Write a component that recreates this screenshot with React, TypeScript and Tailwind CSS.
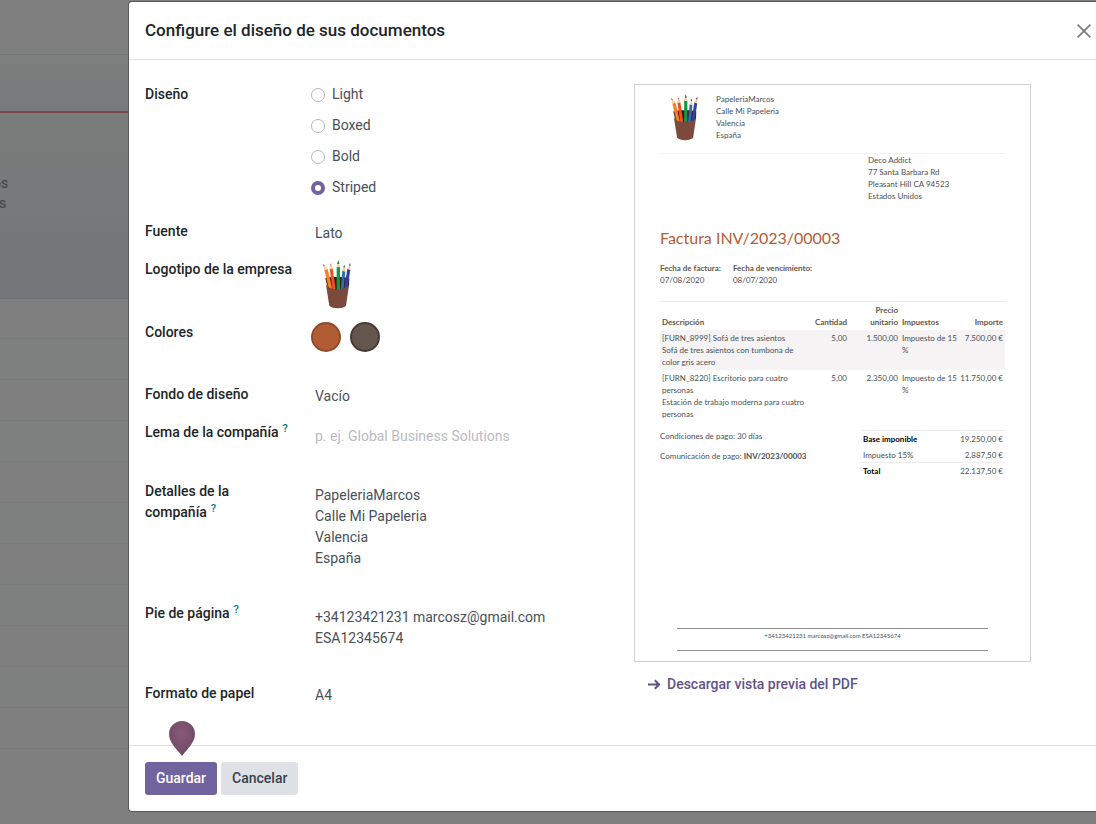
import React from "react";

const PAPER_TEXT = "text-[8px] leading-3";

function PencilCup({ className }: { className?: string }) {
  return (
    <svg viewBox="66 26 87 150" className={className} role="img" aria-label="Logotipo">
      <path d="M76 84 C90 79 134 79 148 84 L147 104 L140 122 L86 122 Z" fill="#3a1712" />
      <path d="M73 59 L83 56 L97 116 L87 117 Z" fill="#f58220" />
      <path d="M70 41 L83 56 L73 60 Z" fill="#f3cfa4" />
      <path d="M70 41 L74 46 L71 49 Z" fill="#8a4a1c" />
      <path d="M89 56 L98 54 L107 117 L98 118 Z" fill="#f04e23" />
      <path d="M92 39 L98 55 L89 57 Z" fill="#f3cfa4" />
      <path d="M92 39 L94 45 L91 46 Z" fill="#c8321a" />
      <path d="M127 61 L136 63 L131 117 L122 117 Z" fill="#2f6fa8" />
      <path d="M133 44 L136 64 L127 61 Z" fill="#f3cfa4" />
      <path d="M133 44 L135 52 L130 50 Z" fill="#23557f" />
      <path d="M142 55 L151 58 L142 117 L132 117 Z" fill="#35409b" />
      <path d="M151 38 L151 59 L142 56 Z" fill="#f3cfa4" />
      <path d="M151 38 L151 47 L147 45 Z" fill="#2b3182" />
      <path d="M110 50 L120 50 L120 119 L110 119 Z" fill="#109a48" />
      <path d="M115 30 L120 51 L110 51 Z" fill="#f3cfa4" />
      <path d="M115 29 L118 41 L112 41 Z" fill="#0b7a3a" />
      <path d="M77 98 C80 124 145 124 148 98 L138 166 C130 176 96 176 88 166 Z" fill="#7b4a3c" />
    </svg>
  );
}

function Field({
  id,
  label,
  help,
  className,
  children,
}: {
  id?: string;
  label: string;
  help?: boolean;
  className: string;
  children: React.ReactNode;
}) {
  return (
    <div className={`flex ${className}`}>
      <label htmlFor={id} className="w-[166px] shrink-0 pr-4 font-medium text-[#212529]">
        {label}
        {help && <sup className="ml-1 text-[11px] leading-none text-[#017e84]">?</sup>}
      </label>
      <div className="min-w-0 flex-1">{children}</div>
    </div>
  );
}

const layouts = ["Light", "Boxed", "Bold", "Striped"];

const invoiceLines = [
  {
    name: "[FURN_8999] Sofá de tres asientos",
    detail: "Sofá de tres asientos con tumbona de color gris acero",
    qty: "5,00",
    price: "1.500,00",
    tax: "Impuesto de 15 %",
    amount: "7.500,00 €",
  },
  {
    name: "[FURN_8220] Escritorio para cuatro personas",
    detail: "Estación de trabajo moderna para cuatro personas",
    qty: "5,00",
    price: "2.350,00",
    tax: "Impuesto de 15 %",
    amount: "11.750,00 €",
  },
];

function InvoicePreview() {
  return (
    <article
      className={`flex min-h-[578px] flex-col border border-[#ced0d2] bg-white px-[25px] pt-2 pb-[10px] font-[Lato,sans-serif] text-[#495057] ${PAPER_TEXT}`}
    >
      <header className="flex h-[61px] border-b border-[#f1f1f2]">
        <PencilCup className="ml-[10px] h-[48px] w-[28px]" />
        <address className="ml-[18px] not-italic">
          PapeleriaMarcos
          <br />
          Calle Mi Papeleria
          <br />
          Valencia
          <br />
          España
        </address>
      </header>
      <address className="ml-[208px] not-italic">
        Deco Addict
        <br />
        77 Santa Barbara Rd
        <br />
        Pleasant Hill CA 94523
        <br />
        Estados Unidos
      </address>
      <h2 className="mt-6 text-base leading-6 text-[#b05d36]">Factura INV/2023/00003</h2>
      <dl className="mt-3 flex gap-3">
        <div>
          <dt className="font-bold text-[#65564d]">Fecha de factura:</dt>
          <dd>07/08/2020</dd>
        </div>
        <div>
          <dt className="font-bold text-[#65564d]">Fecha de vencimiento:</dt>
          <dd>08/07/2020</dd>
        </div>
      </dl>
      <table className="mt-[15px] w-full table-fixed border-t border-[#ececee]">
        <colgroup>
          <col />
          <col className="w-[41px]" />
          <col className="w-[51px]" />
          <col className="w-[58px]" />
          <col className="w-[47px]" />
        </colgroup>
        <thead>
          <tr className="align-bottom text-[#65564d]">
            <th className="px-0.5 py-0.5 text-left font-bold">Descripción</th>
            <th className="px-0.5 py-0.5 text-right font-bold">Cantidad</th>
            <th className="px-0.5 py-0.5 text-right font-bold">Precio unitario</th>
            <th className="px-0.5 py-0.5 text-left font-bold">Impuestos</th>
            <th className="px-0.5 py-0.5 text-right font-bold">Importe</th>
          </tr>
        </thead>
        <tbody>
          {invoiceLines.map((line) => (
            <tr key={line.name} className="align-top odd:bg-[#f5f3f4]">
              <td className="px-0.5 py-0.5">
                {line.name}
                <br />
                {line.detail}
              </td>
              <td className="px-0.5 py-0.5 text-right">{line.qty}</td>
              <td className="px-0.5 py-0.5 text-right">{line.price}</td>
              <td className="py-0.5 pl-0.5">{line.tax}</td>
              <td className="px-0.5 py-0.5 text-right whitespace-nowrap">{line.amount}</td>
            </tr>
          ))}
        </tbody>
      </table>
      <div className="mt-2 flex items-start justify-between">
        <div className="space-y-2">
          <p>Condiciones de pago: 30 días</p>
          <p>
            Comunicación de pago: <b className="font-bold">INV/2023/00003</b>
          </p>
        </div>
        <table className="w-[144px]">
          <tbody>
            <tr className="border-t border-[#ececee]">
              <th className="px-0.5 py-0.5 text-left font-bold text-black">Base imponible</th>
              <td className="px-0.5 py-0.5 text-right">19.250,00 €</td>
            </tr>
            <tr>
              <th className="px-0.5 pt-0.5 pb-px text-left font-normal">Impuesto 15%</th>
              <td className="px-0.5 pt-0.5 pb-px text-right">2.887,50 €</td>
            </tr>
            <tr className="border-t border-[#ececee]">
              <th className="px-0.5 py-0.5 text-left font-bold text-black">Total</th>
              <td className="px-0.5 py-0.5 text-right">22.137,50 €</td>
            </tr>
          </tbody>
        </table>
      </div>
      <footer className="mx-[17px] mt-auto h-[23px] border-y border-[#8d8f91] pt-px text-center text-[6px]">
        +34123421231 marcosz@gmail.com ESA12345674
      </footer>
    </article>
  );
}

function Backdrop() {
  return (
    <div aria-hidden="true" className="absolute inset-0 overflow-hidden bg-[#7f7f7f] text-sm text-[#3f4142]">
      <div className="h-[55px] border-b border-[#737577]" />
      <div className="h-14 bg-linear-to-b from-[#7c7f7d] to-[#77797b]" />
      <div className="h-[188px] border-t-2 border-b border-t-[#7a474d] border-b-[#6f7173] bg-linear-to-b from-[#7a7c7b] to-[#747578] pt-[60px]">
        <p className="-ml-[7px] leading-5">os</p>
        <p className="-ml-px leading-5">s</p>
      </div>
      <div className="h-10 border-b border-[#797b7b]" />
      {Array.from({ length: 10 }, (_, i) => (
        <div key={i} className="h-[41px] border-b border-[#7b7b7b] odd:bg-[#7e807f]" />
      ))}
    </div>
  );
}

export default function App() {
  return (
    <div className="relative min-h-screen overflow-hidden bg-[#7f7f7f] font-[Roboto,sans-serif] text-sm leading-[21px] text-[#495057]">
      <Backdrop />
      <div
        role="dialog"
        aria-labelledby="dialog-title"
        className="relative mt-px ml-32 rounded-l border border-r-0 border-[#59595a] bg-white"
      >
        <header className="flex h-[58px] items-center justify-between border-b border-[#dee2e6] pl-4 pr-[5px]">
          <h1 id="dialog-title" className="text-[17px] font-medium text-[#212529]">
            Configure el diseño de sus documentos
          </h1>
          <button type="button" aria-label="Cerrar">
            <svg viewBox="0 0 14 14" className="size-[14px]" fill="none" stroke="#7b7b7b" strokeWidth="1.7">
              <path d="M0.6 0.6 L13.4 13.4 M13.4 0.6 L0.6 13.4" />
            </svg>
          </button>
        </header>

        <main className="flex pt-6 pr-[65px] pl-4">
          <form className="flex-1">
            <div role="radiogroup" aria-labelledby="layout-label" className="flex h-[137px]">
              <span id="layout-label" className="w-[166px] shrink-0 font-medium text-[#212529]">
                Diseño
              </span>
              <div className="flex flex-col gap-[10px]">
                {layouts.map((name) => (
                  <label key={name} className="flex items-center gap-[7px]">
                    <input
                      type="radio"
                      name="layout"
                      defaultChecked={name === "Striped"}
                      className="size-[14px] appearance-none rounded-full border border-[#b5b7b9] bg-white checked:border-4 checked:border-[#71639e]"
                    />
                    {name}
                  </label>
                ))}
              </div>
            </div>
            <Field id="font" label="Fuente" className="h-[38px]">
              <select id="font" className="mt-0.5 w-[240px] appearance-none px-1">
                <option>Lato</option>
              </select>
            </Field>
            <Field label="Logotipo de la empresa" id="logo" className="h-[63px] whitespace-nowrap">
              <button type="button" id="logo" className="ml-[11px] block">
                <PencilCup className="h-[50px] w-[29px]" />
              </button>
            </Field>
            <Field id="primary-color" label="Colores" className="h-[62px]">
              <div className="flex gap-[9px]">
                <button
                  type="button"
                  id="primary-color"
                  aria-label="Color primario"
                  className="size-[30px] rounded-full border-2 border-[#8f4b2c] bg-[#b05d36]"
                />
                <button
                  type="button"
                  aria-label="Color secundario"
                  className="size-[30px] rounded-full border-2 border-[#453b34] bg-[#65564d]"
                />
              </div>
            </Field>
            <Field id="background" label="Fondo de diseño" className="h-[38px]">
              <select id="background" className="mt-0.5 w-[240px] appearance-none px-1">
                <option>Vacío</option>
              </select>
            </Field>
            <Field id="tagline" label="Lema de la compañía" help className="h-[59px] whitespace-nowrap">
              <input
                id="tagline"
                placeholder="p. ej. Global Business Solutions"
                className="mt-1 w-[260px] px-1 placeholder:text-[#b9bcbf]"
              />
            </Field>
            <Field id="details" label="Detalles de la compañía" help className="h-[122px]">
              <textarea
                id="details"
                rows={4}
                className="mt-1 w-[260px] resize-none overflow-hidden px-1"
                defaultValue={"PapeleriaMarcos\nCalle Mi Papeleria\nValencia\nEspaña"}
              />
            </Field>
            <Field id="footer" label="Pie de página" help className="h-20">
              <textarea
                id="footer"
                rows={2}
                className="mt-1 w-[260px] resize-none overflow-hidden px-1"
                defaultValue={"+34123421231 marcosz@gmail.com\nESA12345674"}
              />
            </Field>
            <Field id="paper" label="Formato de papel" className="h-[62px]">
              <select id="paper" className="mt-0.5 w-[240px] appearance-none px-1">
                <option>A4</option>
              </select>
            </Field>
          </form>

          <section className="w-[397px] shrink-0">
            <InvoicePreview />
            <a href="#pdf" className="mt-3 ml-[14px] flex items-center gap-[7px] font-medium text-[#5f5389]">
              <svg viewBox="0 0 12 12" className="size-3" fill="none" stroke="currentColor" strokeWidth="2">
                <path d="M0 5.5 H11 M6.8 1.2 L11 5.5 L6.8 9.8" />
              </svg>
              Descargar vista previa del PDF
            </a>
          </section>
        </main>

        <footer className="relative flex gap-1 border-t border-[#dee2e6] px-4 pt-4 pb-4 font-medium">
          <svg viewBox="0 0 26 35" className="absolute -top-[25px] left-10 h-[35px] w-[26px]" aria-hidden="true">
            <defs>
              <radialGradient id="drop" cx="50%" cy="38%" r="55%">
                <stop offset="0" stopColor="#875a7b" />
                <stop offset="1" stopColor="#714b67" />
              </radialGradient>
            </defs>
            <path d="M13 0 A13 13 0 0 1 26 13 C26 21 20 26 13 35 C6 26 0 21 0 13 A13 13 0 0 1 13 0 Z" fill="url(#drop)" />
          </svg>
          <button type="button" className="h-[33px] rounded-[3px] bg-[#71639e] px-[11px] text-white">
            Guardar
          </button>
          <button type="button" className="h-[33px] rounded-[3px] bg-[#dee2e6] px-[11px] text-[#374151]">
            Cancelar
          </button>
        </footer>
      </div>
    </div>
  );
}
